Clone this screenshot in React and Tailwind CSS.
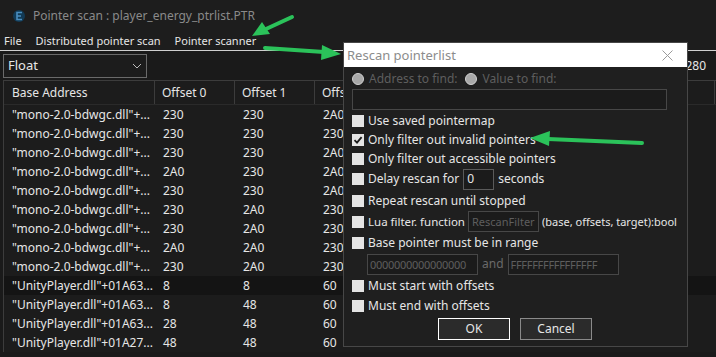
import React from "react";

const rows = [
  ["\"mono-2.0-bdwgc.dll\"+...", "230", "230", "2A0"],
  ["\"mono-2.0-bdwgc.dll\"+...", "230", "230", "230"],
  ["\"mono-2.0-bdwgc.dll\"+...", "230", "230", "2A0"],
  ["\"mono-2.0-bdwgc.dll\"+...", "2A0", "230", "2A0"],
  ["\"mono-2.0-bdwgc.dll\"+...", "230", "230", "2A0"],
  ["\"mono-2.0-bdwgc.dll\"+...", "230", "2A0", "230"],
  ["\"mono-2.0-bdwgc.dll\"+...", "230", "2A0", "230"],
  ["\"mono-2.0-bdwgc.dll\"+...", "2A0", "2A0", "230"],
  ["\"mono-2.0-bdwgc.dll\"+...", "230", "2A0", "230"],
  ["\"UnityPlayer.dll\"+01A63...", "8", "8", "60"],
  ["\"UnityPlayer.dll\"+01A63...", "8", "48", "60"],
  ["\"UnityPlayer.dll\"+01A63...", "28", "48", "60"],
  ["\"UnityPlayer.dll\"+01A27...", "48", "48", "60", "10", "1A0", "38", "20"],
];

// columns past Offset 2 sit under the dialog, their titles never show
const headers = ["Offset 0", "Offset 1", "Offset 2", "", "", "", ""];

function Check({ checked }) {
  return (
    <span className="w-[12px] h-[12px] bg-[#e4e4e4] flex items-center justify-center shrink-0">
      {checked && (
        <svg width="10" height="10" viewBox="0 0 10 10">
          <path d="M1.5 5.2 L4 7.6 L8.6 2.2" stroke="#1a1a1a" strokeWidth="1.8" fill="none" />
        </svg>
      )}
    </span>
  );
}

function CheckRow({ checked, children, className = "" }) {
  return (
    <div className={`flex items-center gap-[4px] ${className}`}>
      <Check checked={checked} />
      {children}
    </div>
  );
}

function Radio({ label }) {
  return (
    <div className="flex items-center gap-[5px]">
      <span className="w-[12px] h-[12px] rounded-full bg-[#a8a8a8] border border-[#d0d0d0]" />
      <span className="text-[#5e5e5e]">{label}</span>
    </div>
  );
}

export default function App() {
  return (
    <div className="w-[716px] h-[357px] bg-[#1a1a1a] relative overflow-hidden font-['Noto_Sans',sans-serif] text-[12px] text-[#e6e6e6] leading-none whitespace-nowrap">
      {/* title bar */}
      <div className="h-[31px] flex items-center pl-[12px] gap-[7px] bg-[#1d1d1d]">
        <svg width="14" height="14" viewBox="0 0 14 14">
          <circle cx="7" cy="7" r="6" fill="#123a55" />
          <path d="M10 3.5 H5 V10.5 H10 M5 7 H9" stroke="#4a8ec0" strokeWidth="1.6" fill="none" />
        </svg>
        <span className="text-[#8a8a8a] text-[12px]">Pointer scan : player_energy_ptrlist.PTR</span>
      </div>

      {/* menu */}
      <div className="h-[20px] flex items-center pl-[4px] gap-[14px] bg-[#1d1d1d] border-b border-[#cfcfcf] text-[11px]">
        <span>File</span>
        <span>Distributed pointer scan</span>
        <span>Pointer scanner</span>
      </div>

      {/* toolbar */}
      <div className="h-[29px] flex items-center justify-between pl-[3px] pr-[10px]">
        <div className="w-[144px] h-[24px] border border-[#6a6a6a] bg-[#1c1c1c] flex items-center justify-between px-[4px]">
          <span className="text-[13px]">Float</span>
          <svg width="10" height="6" viewBox="0 0 10 6">
            <path d="M1 1 L5 5 L9 1" stroke="#bbb" strokeWidth="1" fill="none" />
          </svg>
        </div>
        <span>280</span>
      </div>

      {/* table */}
      <div className="ml-[3px] border-t border-l border-[#3c3c3c] bg-[#1c1c1c]">
        <div className="flex h-[24px] items-center border-b border-[#2a2a2a]">
          <div className="w-[151px] pl-[8px] border-r border-[#3c3c3c] h-full flex items-center">Base Address</div>
          {headers.map((h, i) => (
            <div key={i} className="w-[80px] shrink-0 pl-[7px] border-r border-[#3c3c3c] h-full flex items-center">
              {h}
            </div>
          ))}
        </div>
        {rows.map((r, i) => (
          <div key={i} className={`flex h-[19px] items-center ${i === 9 ? "bg-[#141414]" : ""}`}>
            <div className="w-[152px] pl-[8px] shrink-0">{r[0]}</div>
            {r.slice(1).map((c, j) => (
              <div key={j} className="w-[80px] shrink-0 pl-[7px]">
                {c}
              </div>
            ))}
          </div>
        ))}
      </div>

      {/* dialog */}
      <div className="absolute left-[343px] top-[42px] w-[345px] h-[305px] border border-[#474747] bg-[#1f1f1f] flex flex-col">
        <div className="h-[24px] bg-white flex items-center justify-between pl-[3px] pr-[14px]">
          <span className="text-[#8c8c8c] text-[13px]">Rescan pointerlist</span>
          <svg width="11" height="11" viewBox="0 0 11 11">
            <path d="M0.5 0.5 L10.5 10.5 M10.5 0.5 L0.5 10.5" stroke="#9a9a9a" strokeWidth="1" />
          </svg>
        </div>
        <div className="flex flex-col pl-[8px] pt-[4px]">
          <div className="flex items-center gap-[8px] h-[15px]">
            <Radio label="Address to find:" />
            <Radio label="Value to find:" />
          </div>
          <div className="mt-[3px] w-[315px] h-[21px] border border-[#474747] bg-[#1b1b1b]" />
          <CheckRow className="h-[19px] mt-[1px]">Use saved pointermap</CheckRow>
          <CheckRow className="h-[19px]" checked>Only filter out invalid pointers</CheckRow>
          <CheckRow className="h-[19px]">Only filter out accessible pointers</CheckRow>
          <CheckRow className="h-[22px]">
            <span>Delay rescan for</span>
            <span className="w-[31px] h-[21px] border border-[#5a5a5a] bg-[#1b1b1b] flex items-center pl-[3px]">0</span>
            <span>seconds</span>
          </CheckRow>
          <CheckRow className="h-[21px]">Repeat rescan until stopped</CheckRow>
          <div className="flex items-center gap-[3px] h-[21px]">
            <span className="mr-[1px]"><Check /></span>
            <span className="text-[11.5px]">Lua filter. function</span>
            <span className="w-[71px] h-[21px] border border-[#474747] bg-[#1b1b1b] flex items-center pl-[3px] text-[#5e5e5e] text-[11px]">RescanFilter</span>
            <span className="text-[11px]">(base, offsets, target):bool</span>
          </div>
          <CheckRow className="h-[21px]">Base pointer must be in range</CheckRow>
          <div className="flex items-center gap-[4px] pl-[15px] h-[22px]">
            <span className="w-[111px] h-[21px] border border-[#474747] bg-[#1b1b1b] flex items-center pl-[2px] text-[#5e5e5e] text-[11px] tracking-[-0.3px]">0000000000000000</span>
            <span className="text-[#6a6a6a]">and</span>
            <span className="w-[111px] h-[21px] border border-[#474747] bg-[#1b1b1b] flex items-center pl-[2px] text-[#5e5e5e] text-[11px] tracking-[-0.3px]">FFFFFFFFFFFFFFFF</span>
          </div>
          <CheckRow className="h-[21px]">Must start with offsets</CheckRow>
          <CheckRow className="h-[19px]">Must end with offsets</CheckRow>
          <div className="flex gap-[10px] mt-[3px] ml-[86px]">
            <span className="w-[72px] h-[22px] border border-white bg-[#2b2b2b] flex items-center justify-center">OK</span>
            <span className="w-[72px] h-[22px] border border-[#8a8a8a] bg-[#2b2b2b] flex items-center justify-center">Cancel</span>
          </div>
        </div>
      </div>

      {/* annotation arrows */}
      <svg className="absolute left-0 top-0" width="716" height="357" viewBox="0 0 716 357">
        <g fill="#2bc25a" stroke="#2bc25a" strokeLinecap="round">
          <line x1="292" y1="17" x2="266" y2="29" strokeWidth="4" />
          <polygon points="252,36 262,22 270,34" stroke="none" />
          <line x1="265" y1="48" x2="324" y2="52" strokeWidth="4" />
          <polygon points="341,54 322,45 321,60" stroke="none" />
          <line x1="642" y1="143" x2="548" y2="139" strokeWidth="4" />
          <polygon points="530,138 550,131 549,146" stroke="none" />
        </g>
      </svg>
    </div>
  );
}
